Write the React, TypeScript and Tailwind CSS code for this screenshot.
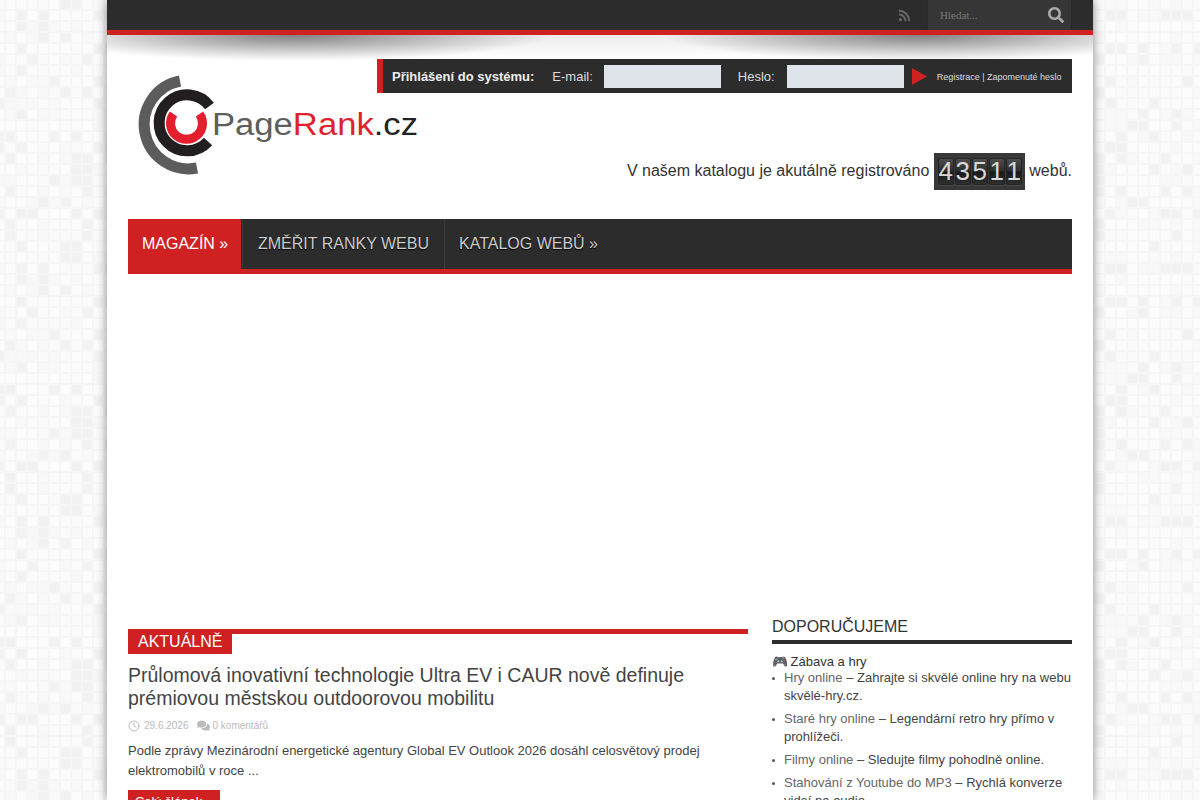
import React from "react";
import { FaRss, FaSearch, FaComments } from "react-icons/fa";
import { FiClock } from "react-icons/fi";

function Tiles() {
  const n = 23;
  const cells: React.ReactElement[] = [];
  let s = 7;
  for (let y = 0; y < n; y++) {
    for (let x = 0; x < n; x++) {
      s = (s * 1103515245 + 12345) & 0x7fffffff;
      const r = (s >> 12) % 10;
      const fill = r < 2 ? "#f2f2f2" : r < 4 ? "#f8f8f8" : r < 7 ? "#fbfbfb" : "#fcfcfc";
      cells.push(<rect key={x + "-" + y} x={x * 11 + 1} y={y * 11 + 1} width={9} height={9} fill={fill} />);
    }
  }
  return (
    <svg className="absolute inset-0 w-full h-full" aria-hidden="true">
      <defs>
        <pattern id="tiles" x="5" y="10" width={n * 11} height={n * 11} patternUnits="userSpaceOnUse">
          <rect width={n * 11} height={n * 11} fill="#f6f6f6" />
          {cells}
        </pattern>
      </defs>
      <rect width="100%" height="100%" fill="url(#tiles)" />
    </svg>
  );
}

function Logo() {
  return (
    <svg viewBox="128 59 300 130" className="w-[300px] h-[130px] shrink-0 mr-[-51px]">
      <path d="M180 81 A44 44 0 1 0 197 168" fill="none" stroke="#5c5c5c" strokeWidth="11" />
      <path d="M209.5 106 A28 28 0 1 0 208 141.5" fill="none" stroke="#231f20" strokeWidth="11" />
      <path d="M173.5 114 A16 16 0 1 0 199.5 114" fill="none" stroke="#e41f2d" strokeWidth="9" />
      <text x="212" y="135" fontFamily="'Liberation Sans', sans-serif" fontSize="31" textLength="206" lengthAdjust="spacingAndGlyphs">
        <tspan fill="#5e5e5e">Page</tspan>
        <tspan fill="#e21f2d">Rank</tspan>
        <tspan fill="#222">.cz</tspan>
      </text>
    </svg>
  );
}

function Digit({ d }: { d: string }) {
  return (
    <span className="w-4 h-[27px] flex items-center justify-center rounded-[2px] border border-[#242424] bg-[linear-gradient(#4e4e4e,#2c2c2c_48%,#181818_52%,#303030)] text-[26px] leading-[25px] text-[#d8d8d8] shadow-[0_1px_0_#4a4a4a]">
      {d}
    </span>
  );
}

const links: [string, string][] = [
  ["Hry online", " – Zahrajte si skvělé online hry na webu skvělé-hry.cz."],
  ["Staré hry online", " – Legendární retro hry přímo v prohlížeči."],
  ["Filmy online", " – Sledujte filmy pohodlně online."],
  ["Stahování z Youtube do MP3", " – Rychlá konverze videí na audio."],
];

export default function App() {
  return (
    <div className="relative h-screen overflow-hidden font-['Liberation_Sans',Arial,sans-serif]">
      <Tiles />
      <div className="relative mx-auto w-[986px] h-full bg-white shadow-[0_0_10px_rgba(0,0,0,0.45)]">
        <div className="h-[35px] bg-[#2c2c2c] border-b-[5px] border-[#cf2122] flex justify-end pr-[21px]">
          <span className="w-[30px] mr-2 flex items-center justify-center text-[#666666] text-[13px]">
            <FaRss />
          </span>
          <div className="w-[145px] h-[30px] bg-[#363636] border-x border-[#2a2a2a] flex items-center pl-3 pr-[7px] justify-between">
            <span className="font-['Liberation_Serif',serif] text-[11px] text-[#777777]">Hledat...</span>
            <FaSearch className="text-[#aaaaaa] text-[16px]" />
          </div>
        </div>

        <div className="h-[184px] pt-6 px-[21px] flex justify-between bg-[radial-gradient(ellipse_260px_26px_at_185px_0,rgba(0,0,0,0.48),transparent),radial-gradient(ellipse_260px_26px_at_815px_0,rgba(0,0,0,0.48),transparent),radial-gradient(ellipse_500px_24px_at_50%_0,rgba(0,0,0,0.08),transparent)] bg-no-repeat">
          <Logo />
          <div className="flex flex-col items-end">
            <div className="w-[695px] h-[34px] bg-[#2c2c2c] border-l-[6px] border-[#cf2122] flex items-center text-[13px] text-[#dddddd] pl-[9px]">
              <b className="text-[#eeeeee] pt-px">Přihlášení do systému:</b>
              <span className="ml-[18px] pt-px">E-mail:</span>
              <span className="ml-[11px] w-[117px] h-[23px] bg-[#dfe3ea]" />
              <span className="ml-[17px] pt-px">Heslo:</span>
              <span className="ml-3 w-[117px] h-[23px] bg-[#dfe3ea]" />
              <svg viewBox="0 0 15 17" className="ml-2 w-[15px] h-[17px]">
                <path d="M0 0 L15 8.5 L0 17 Z" fill="#cf2122" />
              </svg>
              <span className="ml-[10px] pt-[3px] text-[9px] text-[#dddddd] whitespace-nowrap">Registrace | Zapomenuté heslo</span>
            </div>
            <div className="mt-[60px] flex items-center text-[16px] text-[#333333]">
              <span className="pb-[2px]">V našem katalogu je akutálně registrováno</span>
              <span className="ml-[5px] mr-[4px] w-[91px] h-[37px] bg-[#383838] flex items-center justify-center gap-px">
                <Digit d="4" />
                <Digit d="3" />
                <Digit d="5" />
                <Digit d="1" />
                <Digit d="1" />
              </span>
              <span className="pb-[2px]">webů.</span>
            </div>
          </div>
        </div>

        <div className="px-[21px]">
          <nav className="h-[55px] bg-[#2c2c2c] border-b-[5px] border-[#cf2122] flex text-[16px] text-[#cccccc] [text-shadow:0_1px_1px_#000]">
            <span className="w-[114px] bg-[#cf2122] text-white h-[55px] pl-[14px] leading-[49px] [text-shadow:none]">MAGAZÍN »</span>
            <span className="w-[203px] border-x border-[#3a3a3a] pl-[15px] leading-[49px] shadow-[-1px_0_0_#222]">ZMĚŘIT RANKY WEBU</span>
            <span className="pl-[14px] leading-[49px]">KATALOG WEBŮ »</span>
          </nav>

          <div className="mt-[343px] flex gap-6 items-start">
            <main className="w-[620px] pt-3">
              <div className="border-t-[5px] border-[#cf2122]">
                <span className="block -mt-[5px] w-[104px] h-[25px] bg-[#cf2122] text-white text-[16px] leading-[26px] pl-[10px]">AKTUÁLNĚ</span>
              </div>
              <h2 className="mt-[10px] text-[19.5px] leading-[23px] text-[#444444]">
                Průlomová inovativní technologie Ultra EV i CAUR nově definuje prémiovou městskou outdoorovou mobilitu
              </h2>
              <div className="mt-2 flex items-center text-[10px] text-[#bbbbbb]">
                <FiClock className="text-[12px] mr-1" />
                29.6.2026
                <FaComments className="text-[13px] ml-2 mr-[3px]" />
                0 komentářů
              </div>
              <p className="mt-2 text-[13px] leading-5 text-[#444444]">
                Podle zprávy Mezinárodní energetické agentury Global EV Outlook 2026 dosáhl celosvětový prodej elektromobilů v roce ...
              </p>
              <span className="mt-[9px] inline-block w-[92px] h-7 bg-[#cf2122] text-white text-[13px] leading-6 text-center">Celý článek »</span>
            </main>

            <aside className="w-[300px]">
              <h3 className="text-[16px] leading-[20px] text-[#333333] pb-[3px] border-b-4 border-[#2c2c2c]">DOPORUČUJEME</h3>
              <div className="mt-[11px] text-[13px] leading-[14px] text-[#333333]"><span className="mr-[-1px]">🎮</span> Zábava a hry</div>
              <ul className="text-[13px] leading-[18px] text-[#444444]">
                {links.map(([a, b]) => (
                  <li key={a} className="relative pl-3 mb-[5px]">
                    <span className="absolute left-0 top-[8px] w-[3px] h-[3px] rounded-full bg-[#555555]" />
                    <span className="text-[#666666]">{a}</span>
                    {b}
                  </li>
                ))}
              </ul>
            </aside>
          </div>
        </div>
      </div>
    </div>
  );
}
